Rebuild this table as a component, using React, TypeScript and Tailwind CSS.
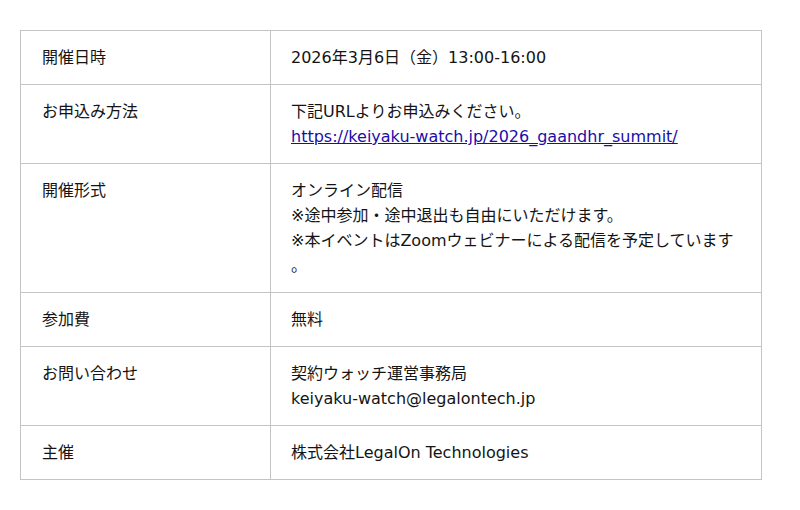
import React from 'react';

// イベント概要テーブル
const rows: { label: string; value: React.ReactNode }[] = [
    { label: '開催日時', value: '2026年3月6日（金）13:00-16:00' },
    {
        label: 'お申込み方法',
        value: (
            <>
                <p>下記URLよりお申込みください。</p>
                <p>
                    <a href="#" className="text-[#1a0dab] underline">
                        https://keiyaku-watch.jp/2026_gaandhr_summit/
                    </a>
                </p>
            </>
        ),
    },
    {
        label: '開催形式',
        value: (
            <>
                <p>オンライン配信</p>
                <p>※途中参加・途中退出も自由にいただけます。</p>
                <p className="[line-break:anywhere]">※本イベントはZoomウェビナーによる配信を予定しています。</p>
            </>
        ),
    },
    { label: '参加費', value: '無料' },
    {
        label: 'お問い合わせ',
        value: (
            <>
                <p>契約ウォッチ運営事務局</p>
                <p>keiyaku-watch@legalontech.jp</p>
            </>
        ),
    },
    { label: '主催', value: '株式会社LegalOn Technologies' },
];

export default function App() {
    return (
        <div
            className="w-[800px] h-[510px] bg-white pt-[30px] px-[20px] text-[16px] leading-[25px] text-[#141414]"
            style={{ fontFamily: '"DejaVu Sans", "Noto Sans CJK JP", sans-serif' }}
        >
            <table className="w-[742px] border-collapse border border-[#d4d4d4] table-fixed">
                <colgroup>
                    <col className="w-[250px]" />
                    <col />
                </colgroup>
                <tbody>
                    {rows.map((r) => (
                        <tr key={r.label}>
                            <td className="border border-[#c4c4c4] px-[21px] py-[14px] align-top">{r.label}</td>
                            <td className="border border-[#c4c4c4] px-[20px] py-[14px] align-top">{r.value}</td>
                        </tr>
                    ))}
                </tbody>
            </table>
        </div>
    );
}
